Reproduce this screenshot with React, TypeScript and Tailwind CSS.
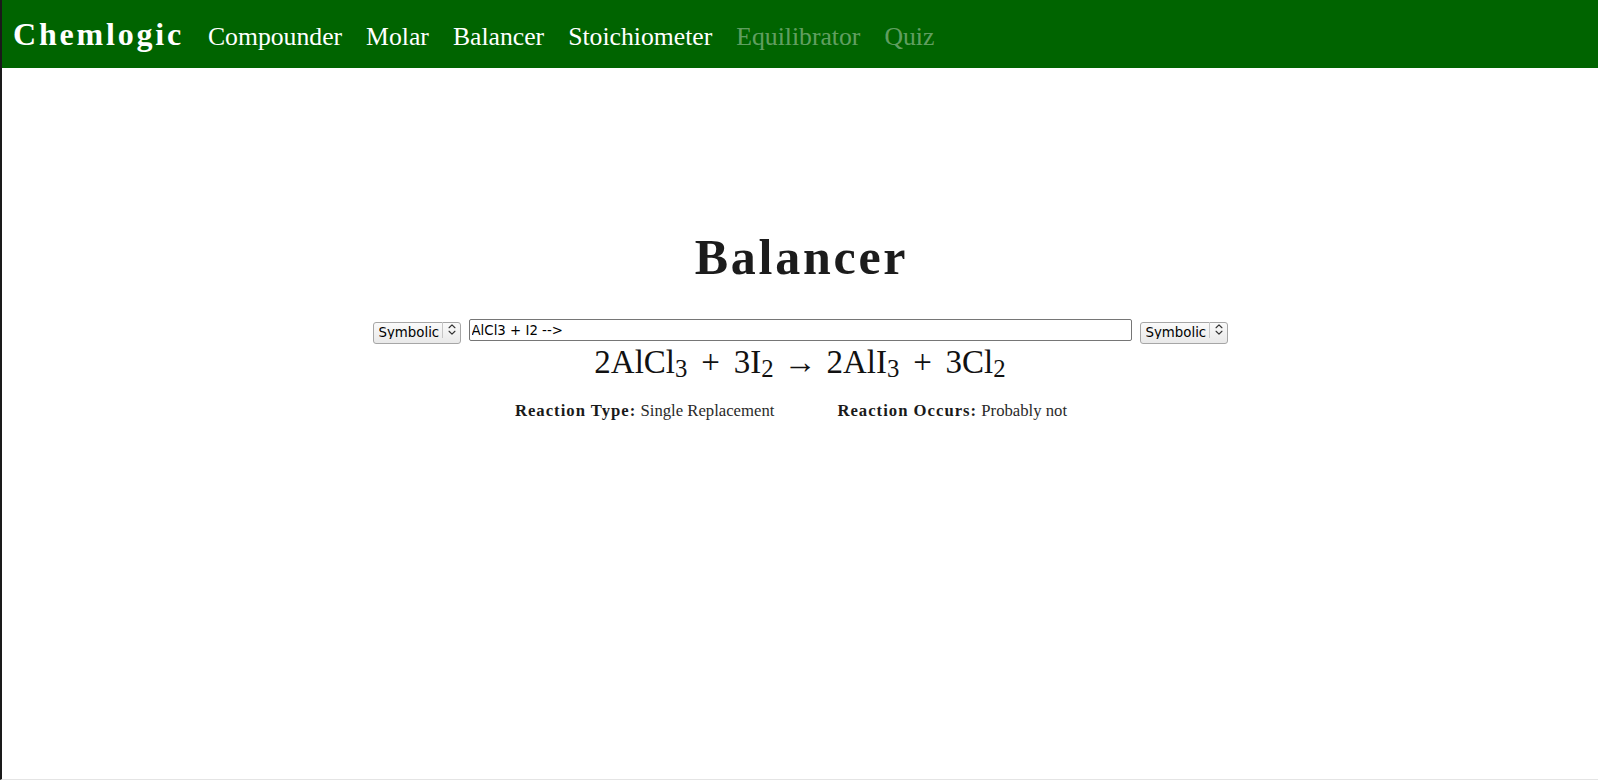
import { ChevronsUpDown } from "lucide-react";

const serif = "font-['Liberation_Serif','Times_New_Roman',serif]";
const sans = "font-['DejaVu_Sans','Liberation_Sans',sans-serif]";

const navItems = [
  { label: "Compounder", disabled: false },
  { label: "Molar", disabled: false },
  { label: "Balancer", disabled: false },
  { label: "Stoichiometer", disabled: false },
  { label: "Equilibrator", disabled: true },
  { label: "Quiz", disabled: true },
];

function SymbolSelect() {
  return (
    <div className="relative h-[22px] w-[88px] shrink-0">
      <select
        defaultValue="Symbolic"
        className={`${sans} h-full w-full appearance-none rounded-[3px] border border-[#a6a6a6] bg-linear-to-b from-[#fafafa] to-[#e9e9e9] pl-[5px] pr-[20px] text-[13.33px] leading-none text-black outline-none`}
      >
        <option>Symbolic</option>
        <option>Name</option>
      </select>
      <div className="pointer-events-none absolute top-[3px] bottom-[3px] right-[18px] w-px bg-[#c6c6c6]" />
      <ChevronsUpDown
        className="pointer-events-none absolute right-[2px] top-[3px] h-[15px] w-[14px] text-[#333]"
        strokeWidth={2}
      />
    </div>
  );
}

function Equation() {
  return (
    <div className={`${serif} mt-[5px] flex items-baseline text-[33px] leading-none text-[#111] [&_sub]:bottom-[-0.15em]`}>
      <span>
        2AlCl<sub>3</sub>
      </span>
      <span className="mx-[0.42em]">+</span>
      <span>
        3I<sub>2</sub>
      </span>
      <span className="mx-[0.3em]">→</span>
      <span>
        2AlI<sub>3</sub>
      </span>
      <span className="mx-[0.42em]">+</span>
      <span>
        3Cl<sub>2</sub>
      </span>
    </div>
  );
}

export default function App() {
  return (
    <div className="box-border flex h-[780px] flex-col border-l-2 border-b border-l-[#1a1a1a] border-b-[#e4e4e4] bg-white">
      <header className={`${serif} flex h-[68px] shrink-0 items-baseline gap-[24px] bg-[#006400] pl-[11px] pt-[18px]`}>
        <span className="text-[32px] font-bold leading-none tracking-[2.8px] text-white">Chemlogic</span>
        {navItems.map((item) => (
          <a
            key={item.label}
            className={`text-[25.7px] leading-none ${item.disabled ? "text-white/40" : "text-white"}`}
          >
            {item.label}
          </a>
        ))}
      </header>

      <main className="flex flex-col items-center">
        <h1 className={`${serif} mt-[164px] pl-[3px] text-[50px] font-bold leading-none tracking-[2.75px] text-[#1c1c1c]`}>
          Balancer
        </h1>

        <div className="mt-[37px] flex items-center gap-[8px]">
          <SymbolSelect />
          <input
            type="text"
            defaultValue="AlCl3 + I2 -->"
            className={`${sans} box-border h-[22px] w-[663px] rounded-[2px] border border-[#767676] px-[2px] text-[13.33px] text-black outline-none`}
          />
          <SymbolSelect />
        </div>

        <Equation />

        <div className={`${serif} mt-[24px] flex gap-[63px] pr-[18px] text-[16.7px] leading-none text-[#2a2a2a]`}>
          <div>
            <span className="font-bold tracking-[1px] text-[#1a1a1a]">Reaction Type:</span> Single Replacement
          </div>
          <div>
            <span className="font-bold tracking-[1px] text-[#1a1a1a]">Reaction Occurs:</span> Probably not
          </div>
        </div>
      </main>
    </div>
  );
}
